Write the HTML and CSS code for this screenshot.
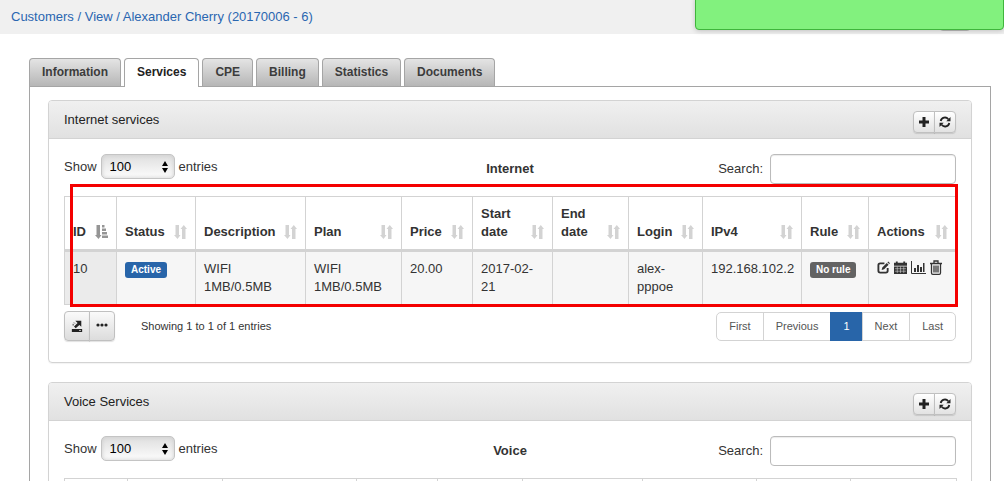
FILE: index.html
```html
<!DOCTYPE html>
<html lang="en">
<head>
<meta charset="utf-8">
<title>Customers / View</title>
<link rel="stylesheet" href="styles.css">
</head>
<body>
<svg class="sprite" aria-hidden="true">
  <symbol id="plus" viewBox="0 0 12 12"><path d="M4.500 1h3v3.500H11v3H7.500V11h-3V7.500H1v-3h3.500z"/></symbol>
  <symbol id="refresh" viewBox="0 0 12 12"><path d="M1.700 5A4.300 4.300 0 0 1 9.300 3.200M10.300 7A4.300 4.300 0 0 1 2.700 8.800" fill="none" stroke="currentColor" stroke-width="1.800"/><path d="M11.500 1v4.200H7.300zM.5 11V6.800h4.200z"/></symbol>
  <symbol id="sort" viewBox="0 0 13 14"><path d="M1.500 0h3.500v10h1.500L3.500 14 0 10h1.500zM8 14h3.500V4H13L9.800 0 6.500 4H8z"/></symbol>
  <symbol id="sort-asc" viewBox="0 0 13 14"><path d="M1.500 0h3.500v10h1.500L3.500 14 0 10h1.500zM7 0h2.500v2.500H7zM7 3.500h4V6H7zM7 7h5v2.500H7zM7 10.500h6V13H7z"/></symbol>
  <symbol id="export" viewBox="0 0 14 14"><path d="M1 10.500h12V14H1zM5 1h7v7L9.800 5.800 5.500 9.500 3.500 7.500l4.200-4z"/><path d="M2.500 4.500v2M3.500 3l1 1" stroke="currentColor" fill="none"/><path d="M9.500 12.200h2" stroke="#eee" fill="none"/></symbol>
  <symbol id="dots" viewBox="0 0 12 12"><circle cx="2" cy="5" r="1.600"/><circle cx="6" cy="5" r="1.600"/><circle cx="10" cy="5" r="1.600"/></symbol>
  <symbol id="edit" viewBox="0 0 14 14"><path d="M8 2.500H3.500Q1.500 2.500 1.500 4.500v6q0 2 2 2h6q2 0 2-2V7.500" fill="none" stroke="currentColor" stroke-width="2"/><path d="M5 9.700l.7-2.800 4.800-4.800 2 2-4.800 4.800zM11.200 1.400l.9-.9 1.900 1.900-.9.9z"/></symbol>
  <symbol id="calendar" viewBox="0 0 14 14"><path d="M0 2h2V.5h2V2h6V.5h2V2h2v3H0zM0 5.800h14V14H0z"/><path d="M1 8.300h12M1 11h12M3.500 6v7M7 6v7M10.500 6v7" stroke="#f6f6f6" stroke-width=".5" fill="none"/></symbol>
  <symbol id="chart" viewBox="0 0 15 13"><path d="M.5 0v12.500H15" fill="none" stroke="currentColor"/><path d="M3 7h2v4H3zM6 4h2v7H6zM9 6h2v5H9zM12 2h1.500v9H12z"/></symbol>
  <symbol id="trash" viewBox="0 0 12 15"><path d="M0 3.500h12M4 3V1h4v2M1.500 4v9q0 1.300 1.300 1.300h6.400q1.300 0 1.300-1.300V4M4 5.500v7M6 5.500v7M8 5.500v7" fill="none" stroke="currentColor" stroke-width="1.300"/></symbol>
</svg>

<header class="topbar">
  <nav class="crumbs" aria-label="Breadcrumb"><a href="#">Customers</a> / <a href="#">View</a> / <a href="#">Alexander Cherry (20170006 - 6)</a></nav>
  <div class="topbar-tool" aria-hidden="true"></div>
  <div class="toast" role="status"></div>
</header>

<main class="page">
  <div class="tabs" role="tablist">
    <button class="tab" role="tab">Information</button>
    <button class="tab active" role="tab" aria-selected="true">Services</button>
    <button class="tab" role="tab">CPE</button>
    <button class="tab" role="tab">Billing</button>
    <button class="tab" role="tab">Statistics</button>
    <button class="tab" role="tab">Documents</button>
  </div>
  <div class="tab-body">
    <section class="panel">
      <div class="panel-head">
        <h2 class="panel-title">Internet services</h2>
        <div class="group">
          <button class="mini" aria-label="Add"><svg class="i12"><use href="#plus"/></svg></button><button class="mini" aria-label="Refresh"><svg class="i12"><use href="#refresh"/></svg></button>
        </div>
      </div>
      <div class="panel-body">
        <div class="toolbar">
          <label class="length">Show
            <span class="pick"><select class="select"><option>100</option></select><svg class="arrows" viewBox="0 0 6 12"><path d="M3 0l3 5H0zM3 12l3-5H0z"/></svg></span>
            entries</label>
          <strong>Internet</strong>
          <label class="search">Search: <input class="search-input" type="text"></label>
        </div>
        <div class="table-wrap">
          <table class="grid">
            <colgroup><col class="w52"><col class="w79"><col class="w110"><col class="w96"><col class="w71"><col class="w80"><col class="w76"><col class="w74"><col class="w99"><col class="w67"><col class="w88"></colgroup>
            <thead><tr>
              <th><div class="th"><span>ID</span><svg class="sort on"><use href="#sort-asc"/></svg></div></th>
              <th><div class="th"><span>Status</span><svg class="sort"><use href="#sort"/></svg></div></th>
              <th><div class="th"><span>Description</span><svg class="sort"><use href="#sort"/></svg></div></th>
              <th><div class="th"><span>Plan</span><svg class="sort"><use href="#sort"/></svg></div></th>
              <th><div class="th"><span>Price</span><svg class="sort"><use href="#sort"/></svg></div></th>
              <th><div class="th"><span>Start date</span><svg class="sort"><use href="#sort"/></svg></div></th>
              <th><div class="th"><span>End date</span><svg class="sort"><use href="#sort"/></svg></div></th>
              <th><div class="th"><span>Login</span><svg class="sort"><use href="#sort"/></svg></div></th>
              <th><div class="th"><span>IPv4</span><svg class="sort"><use href="#sort"/></svg></div></th>
              <th><div class="th"><span>Rule</span><svg class="sort"><use href="#sort"/></svg></div></th>
              <th><div class="th"><span>Actions</span><svg class="sort"><use href="#sort"/></svg></div></th>
            </tr></thead>
            <tbody><tr>
              <td class="sorted">10</td>
              <td><span class="badge blue">Active</span></td>
              <td>WIFI 1MB/0.5MB</td>
              <td>WIFI 1MB/0.5MB</td>
              <td>20.00</td>
              <td>2017-02-21</td>
              <td></td>
              <td>alex-pppoe</td>
              <td>192.168.102.2</td>
              <td><span class="badge">No rule</span></td>
              <td><div class="actions">
                <a href="#" aria-label="Edit"><svg class="i13"><use href="#edit"/></svg></a>
                <a href="#" aria-label="Calendar"><svg class="i13"><use href="#calendar"/></svg></a>
                <a href="#" aria-label="Statistics"><svg class="i15"><use href="#chart"/></svg></a>
                <a href="#" aria-label="Delete"><svg class="i-trash"><use href="#trash"/></svg></a>
              </div></td>
            </tr></tbody>
          </table>
          <div class="highlight"></div>
        </div>
        <div class="foot">
          <div class="group">
            <button class="tool" aria-label="Export"><svg class="i12"><use href="#export"/></svg></button><button class="tool" aria-label="More"><svg class="i12"><use href="#dots"/></svg></button>
          </div>
          <div class="info">Showing 1 to 1 of 1 entries</div>
          <nav class="pager" aria-label="Pages"><a href="#">First</a><a href="#">Previous</a><a href="#" class="current">1</a><a href="#">Next</a><a href="#">Last</a></nav>
        </div>
      </div>
    </section>

    <section class="panel">
      <div class="panel-head">
        <h2 class="panel-title">Voice Services</h2>
        <div class="group">
          <button class="mini" aria-label="Add"><svg class="i12"><use href="#plus"/></svg></button><button class="mini" aria-label="Refresh"><svg class="i12"><use href="#refresh"/></svg></button>
        </div>
      </div>
      <div class="panel-body">
        <div class="toolbar">
          <label class="length">Show
            <span class="pick"><select class="select"><option>100</option></select><svg class="arrows" viewBox="0 0 6 12"><path d="M3 0l3 5H0zM3 12l3-5H0z"/></svg></span>
            entries</label>
          <strong>Voice</strong>
          <label class="search">Search: <input class="search-input" type="text"></label>
        </div>
        <table class="grid voice">
          <colgroup><col class="w63"><col class="w95"><col class="w134"><col class="w81"><col class="w85"><col class="w120"><col class="w114"><col class="w94"><col class="w106"></colgroup>
          <thead><tr><th></th><th></th><th></th><th></th><th></th><th></th><th></th><th></th><th></th></tr></thead>
        </table>
      </div>
    </section>
  </div>
</main>
</body>
</html>
```
FILE: styles.css
```css
* { box-sizing: border-box; }
body {
  margin: 0;
  height: 100vh;
  overflow: hidden;
  background: #fff;
  color: #333;
  font: 13px/18px "Liberation Sans", Arial, sans-serif;
}
svg { display: block; fill: currentColor; }
button, select, input { font: inherit; color: inherit; }
a { color: inherit; text-decoration: none; }
.sprite { position: absolute; width: 0; height: 0; }

.topbar {
  position: relative;
  display: flex;
  justify-content: space-between;
  height: 34px;
  padding: 0 33px 0 11px;
  background: #f0f0f0;
}
.crumbs { padding-top: 8px; color: #2a66b0; }
.topbar-tool {
  width: 32px;
  height: 31px;
  border: 1px solid #bbb;
  border-radius: 4px;
  background: #ddd;
}
.toast {
  position: absolute;
  top: -4px;
  right: 0;
  width: 309px;
  height: 34px;
  border: 1px solid #3fb53c;
  border-radius: 4px;
  background: #82f17e;
  box-shadow: 0 1px 5px rgba(0, 0, 0, .2);
}

.page { padding: 24px 13px 0 29px; }
.tabs { display: flex; gap: 3px; }
.tab {
  height: 28px;
  padding: 0 12px 1px;
  border: 1px solid #a5a5a5;
  border-bottom: 0;
  border-radius: 4px 4px 0 0;
  background: linear-gradient(#e4e4e4, #b6b6b6);
  color: #3c3c3c;
  font-size: 12px;
  font-weight: bold;
}
.tab.active {
  height: 29px;
  margin-bottom: -1px;
  padding-bottom: 2px;
  background: #fff;
  color: #222;
  z-index: 1;
}
.tab-body {
  padding: 13px 18px;
  border: 1px solid #a5a5a5;
}

.panel {
  margin-bottom: 19px;
  border: 1px solid #d3d3d3;
  border-radius: 4px;
  box-shadow: 0 1px 1px rgba(0, 0, 0, .05);
}
.panel-head {
  display: flex;
  justify-content: space-between;
  height: 38px;
  padding: 10px 15px 0;
  border-bottom: 1px solid #d3d3d3;
  border-radius: 3px 3px 0 0;
  background: linear-gradient(#f0f0f0, #e1e1e1);
}
.panel-title { margin: 0; color: #222; font-size: 13px; font-weight: normal; line-height: 18px; }
.panel-body { padding: 15px 15px 21px; }

.group { display: flex; }
.mini, .tool {
  display: grid;
  place-items: center;
  padding: 0;
  border: 1px solid #c0c0c0;
  background: linear-gradient(#fff, #e2e2e2);
  color: #222;
  box-shadow: 0 1px 1px rgba(0, 0, 0, .12);
}
.mini { width: 22px; height: 22px; }
.tool { width: 26px; height: 30px; background: linear-gradient(#fafafa, #dcdcdc); }
.group button:first-child { border-radius: 4px 0 0 4px; }
.group button:last-child { margin-left: -1px; border-radius: 0 4px 4px 0; }
.i12 { width: 12px; height: 12px; }
.i13 { width: 13px; height: 13px; }
.i15 { width: 15px; height: 13px; }
.i-trash { width: 12px; height: 15px; }

.toolbar {
  display: grid;
  grid-template-columns: 1fr auto 1fr;
  align-items: center;
  height: 30px;
  margin-bottom: 12px;
}
.length { display: flex; align-items: center; align-self: start; gap: 4px; }
.pick { position: relative; }
.select {
  display: block;
  width: 74px;
  height: 25px;
  padding: 0 8px;
  appearance: none;
  border: 1px solid #c4c4c4;
  border-radius: 5px;
  background: linear-gradient(#dedede, #fdfdfd);
  box-shadow: inset 0 0 4px #ccc;
  color: #000;
}
.arrows {
  position: absolute;
  top: 7px;
  right: 7px;
  width: 6px;
  height: 12px;
  color: #000;
  pointer-events: none;
}
.search { display: flex; align-items: center; justify-content: flex-end; gap: 7px; }
.search-input {
  width: 186px;
  height: 30px;
  border: 1px solid #bbb;
  border-radius: 4px;
  background: #fff;
  box-shadow: inset 0 1px 1px rgba(0, 0, 0, .08);
}

.table-wrap { position: relative; }
.grid { width: 100%; table-layout: fixed; border-collapse: collapse; }
.grid th, .grid td {
  padding: 8px;
  border: 1px solid #d3d3d3;
  text-align: left;
  vertical-align: top;
}
.grid th { border-bottom: 3px solid #d3d3d3; vertical-align: bottom; }
.grid td { background: #f6f6f6; }
.grid td.sorted { background: #ebebeb; }
.voice th { height: 55px; }
.th { display: flex; justify-content: space-between; align-items: flex-end; }
.sort { flex: none; width: 13px; height: 14px; margin-bottom: 2px; color: #d3d3d3; }
.sort.on { color: #959595; }
.w52 { width: 52px; }
.w63 { width: 63px; }
.w67 { width: 67px; }
.w71 { width: 71px; }
.w74 { width: 74px; }
.w76 { width: 76px; }
.w79 { width: 79px; }
.w80 { width: 80px; }
.w81 { width: 81px; }
.w85 { width: 85px; }
.w88 { width: 88px; }
.w94 { width: 94px; }
.w95 { width: 95px; }
.w96 { width: 96px; }
.w99 { width: 99px; }
.w106 { width: 106px; }
.w110 { width: 110px; }
.w114 { width: 114px; }
.w120 { width: 120px; }
.w134 { width: 134px; }
.badge {
  display: block;
  width: fit-content;
  margin-top: 2px;
  padding: 0 6px;
  border-radius: 3px;
  background: #636363;
  color: #fff;
  font-size: 10px;
  font-weight: bold;
  line-height: 16px;
  white-space: nowrap;
}
.badge.blue { background: #2865a9; }
.actions { display: flex; gap: 4px; align-items: center; }
.highlight {
  position: absolute;
  inset: -12px -2px -2px 6px;
  border: 3px solid #f40000;
  pointer-events: none;
}

.foot { display: flex; align-items: center; margin-top: 6px; }
.info { margin: 0 auto 0 26px; font-size: 11px; }
.pager { display: flex; align-self: flex-end; color: #555; font-size: 11px; }
.pager a {
  padding: 5px 12px;
  border: 1px solid #d3d3d3;
  margin-left: -1px;
  line-height: 17px;
}
.pager a:first-child { border-radius: 5px 0 0 5px; }
.pager a:last-child { border-radius: 0 5px 5px 0; }
.pager .current { border-color: #2865a9; background: #2865a9; color: #fff; }
```
